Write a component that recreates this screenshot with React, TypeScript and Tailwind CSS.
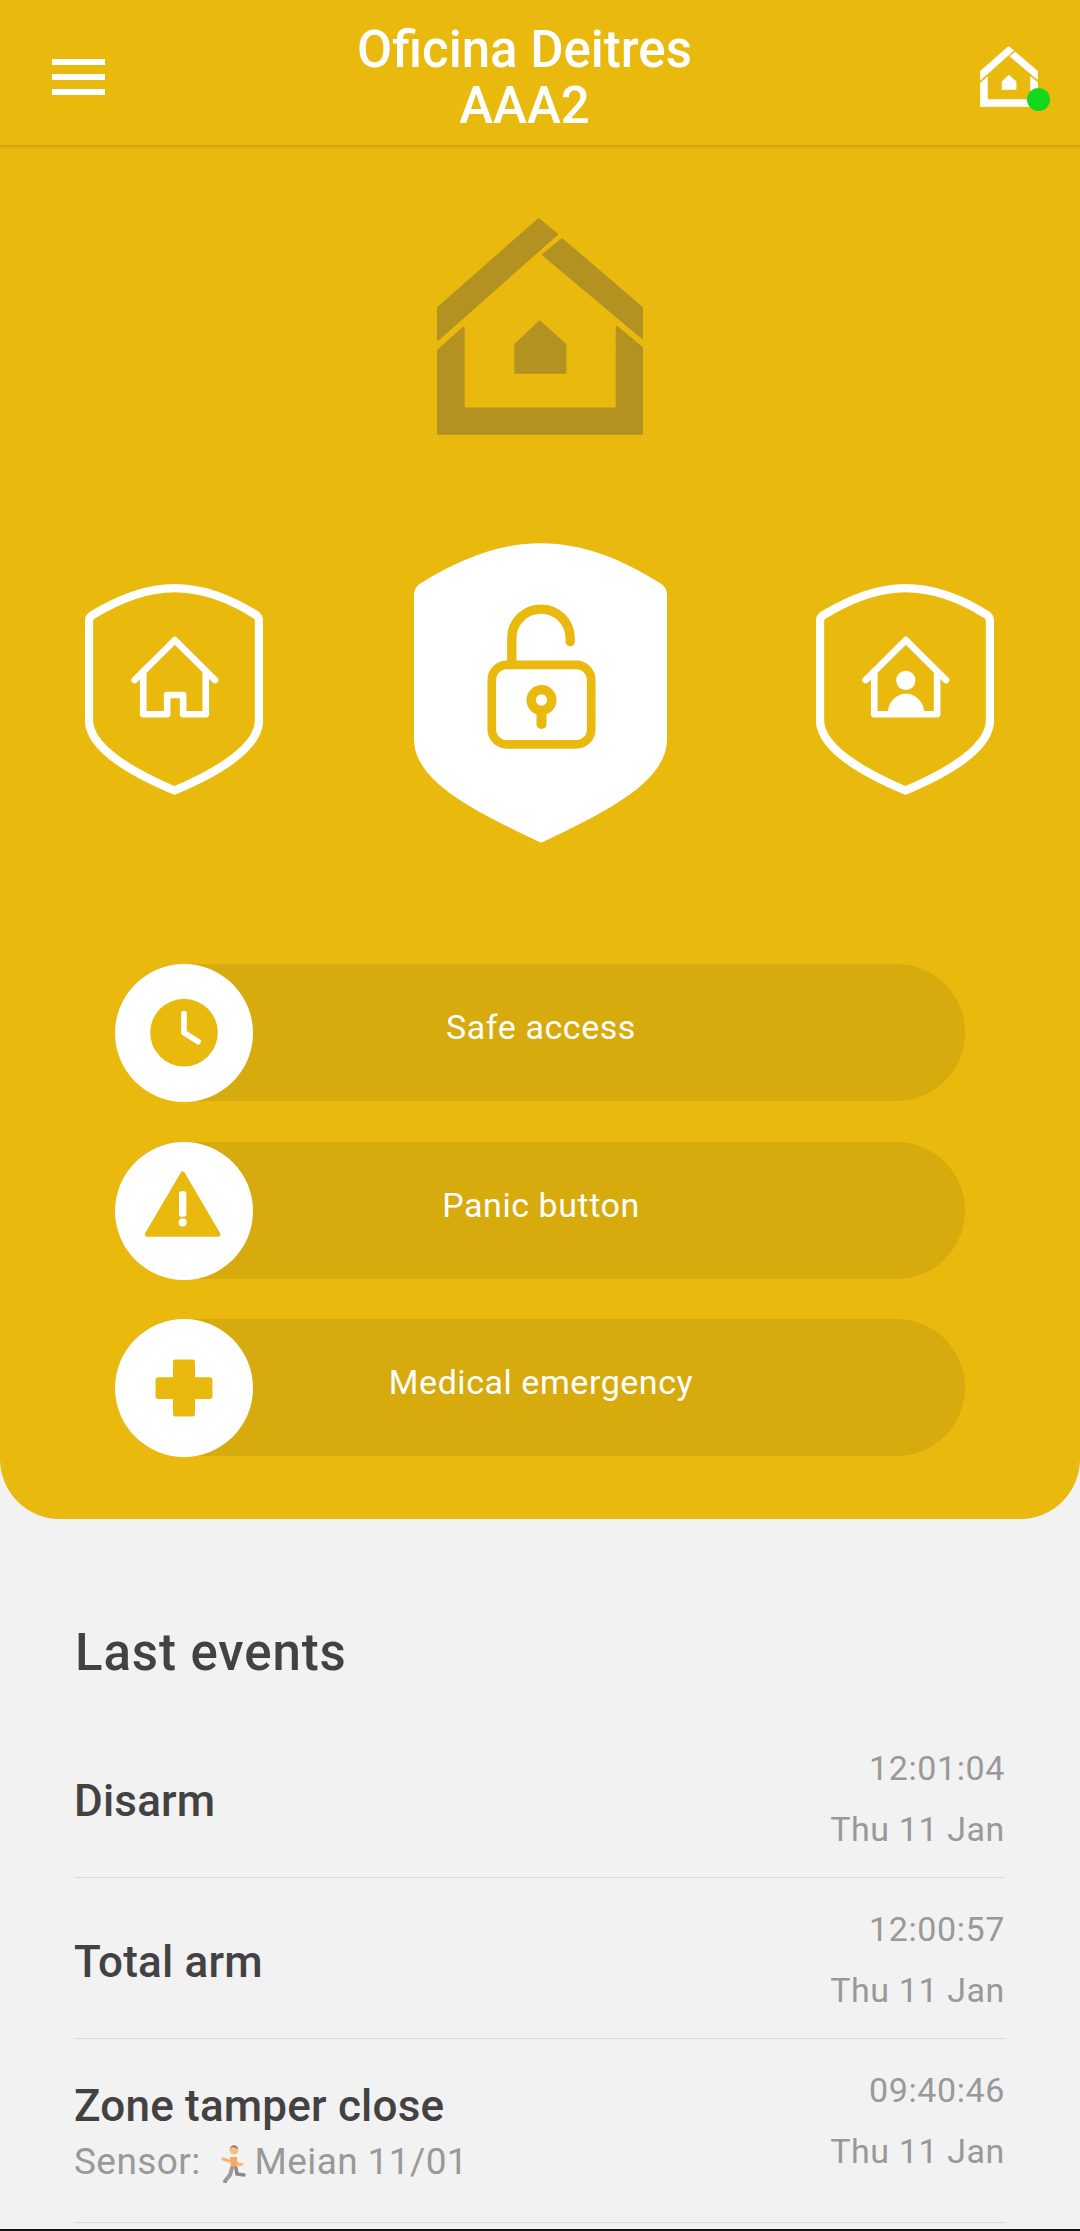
const YELLOW = '#e9b90e';

const ACTIONS = [
  { label: 'Safe access', icon: 'clock' },
  { label: 'Panic button', icon: 'warning' },
  { label: 'Medical emergency', icon: 'cross' },
];

const EVENTS = [
  { title: 'Disarm', time: '12:01:04', date: 'Thu 11 Jan', sensor: false },
  { title: 'Total arm', time: '12:00:57', date: 'Thu 11 Jan', sensor: false },
  { title: 'Zone tamper close', time: '09:40:46', date: 'Thu 11 Jan', sensor: true },
];

function Logo({ className, fill }: { className: string; fill: string }) {
  return (
    <svg viewBox="82 55 618 650" className={className} fill={fill} stroke={fill} strokeWidth="6" strokeLinejoin="round">
      <path d="M387 58 L442 103 L85 420 L85 324 Z" />
      <path d="M457 118 L697 324 L697 414 L400 165 Z" />
      <path d="M85 452 L162 383 L162 626 L621 626 L621 381 L697 444 L697 702 L85 702 Z" />
      <path d="M390 365 L467 434 L467 519 L317 519 L317 434 Z" />
    </svg>
  );
}

function SideShield({ side }: { side: 'left' | 'right' }) {
  const left = side === 'left';
  return (
    <svg viewBox={left ? '75 72 535 633' : '78 72 535 633'} className="mb-[7px] h-[211px] w-[178px]" fill="none" stroke="#fff" strokeLinecap="round" strokeLinejoin="round">
      <g transform={left ? undefined : 'translate(3 0)'}>
        <path strokeWidth="25" d="M344 84 C430 84 510 115 590 165 Q598 172 598 182 L598 480 C598 560 480 635 344 692 C208 635 87 560 87 480 L87 182 Q87 172 97 165 C180 115 260 84 344 84 Z" />
        <path strokeWidth="20" d="M224 360 L345 240 L466 360" />
        {left ? (
          <path strokeWidth="20" d="M250 335 L250 463 L322 463 L322 405 L370 405 L370 463 L438 463 L438 335" />
        ) : (
          <>
            <path strokeWidth="20" d="M250 335 L250 463 L439 463 L439 335" />
            <circle cx="345" cy="361" r="29" fill="#fff" stroke="none" />
            <path d="M289 470 C289 378 402 378 402 470 Z" fill="#fff" stroke="none" />
          </>
        )}
      </g>
    </svg>
  );
}

function MainShield() {
  return (
    <svg viewBox="102 70 758 898" className="ml-[2px] h-[300px] w-[253px]" fill="none" stroke={YELLOW} strokeLinecap="round">
      <path
        fill="#fff"
        stroke="none"
        d="M483 70 C610 70 730 120 840 190 Q860 202 860 225 L860 655 C860 780 700 865 483 968 C265 865 102 780 102 655 L102 225 Q102 202 122 190 C235 120 355 70 483 70 Z"
      />
      <rect x="335" y="435" width="298" height="238" rx="45" strokeWidth="26" />
      <path strokeWidth="28" d="M395 430 L395 355 A87.5 87.5 0 0 1 570 355 L570 365" />
      <circle cx="484" cy="540" r="31" strokeWidth="28" />
      <path strokeWidth="30" d="M484 575 L484 612" />
    </svg>
  );
}

function ActionIcon({ icon }: { icon: string }) {
  if (icon === 'clock') {
    return (
      <svg viewBox="76 42 412 412" className="h-full w-full">
        <circle cx="282" cy="247" r="101" fill={YELLOW} />
        <path d="M282 190 L282 247 L324 274" fill="none" stroke="#fff" strokeWidth="17" strokeLinecap="round" strokeLinejoin="round" />
      </svg>
    );
  }
  if (icon === 'warning') {
    return (
      <svg viewBox="76 573 412 412" className="h-full w-full">
        <path d="M278 668 L384 849 L172 849 Z" fill={YELLOW} stroke={YELLOW} strokeWidth="14" strokeLinejoin="round" />
        <rect x="267" y="720" width="22" height="76" rx="6" fill="#fff" />
        <circle cx="278" cy="813" r="12" fill="#fff" />
      </svg>
    );
  }
  return (
    <svg viewBox="76 1107 412 412" className="h-full w-full">
      <rect x="249" y="1228" width="66" height="170" rx="8" fill={YELLOW} />
      <rect x="197" y="1281" width="170" height="65" rx="8" fill={YELLOW} />
    </svg>
  );
}

// small stand-in for the running person emoji
function Runner() {
  return (
    <svg viewBox="0 0 30 42" className="ml-[15px] mr-[7px] inline-block h-[42px] w-[32px] align-[-10px]">
      <path d="M6 17 L12 19" stroke="#f7b26a" strokeWidth="3" strokeLinecap="round" />
      <path d="M13 15 L20 15 L20 26 L14 26 Z" fill="#f9a75a" />
      <circle cx="17" cy="8" r="4.5" fill="#f7c083" />
      <path d="M13 7 C13 2 21 2 21 7 L19 6 L15 5 Z" fill="#9a7f72" />
      <path d="M19 19 L22 23 L25 22" fill="none" stroke="#f7b26a" strokeWidth="2.5" strokeLinecap="round" />
      <path d="M15 26 L13 33 L8 39" fill="none" stroke="#9b9b9b" strokeWidth="4" strokeLinecap="round" />
      <path d="M19 26 L20 32 L27 33" fill="none" stroke="#8a8a8a" strokeWidth="3.5" strokeLinecap="round" />
      <path d="M5 40 L10 38 L10 41 Z" fill="#8a94b8" />
    </svg>
  );
}

export default function App() {
  return (
    <div className="flex h-[2231px] w-[1080px] flex-col overflow-hidden bg-[#f2f2f2] font-['Roboto',sans-serif]">
      <div className="h-[1519px] shrink-0 rounded-b-[60px] bg-[#e9b90e]">
        {/* Top bar */}
        <header className="relative flex h-[145px] items-center justify-between pl-[52px] pr-[30px] shadow-[0_2px_3px_rgba(120,90,0,0.25)]">
          <div className="mt-[8px] flex w-[53px] flex-col gap-[9px]">
            <div className="h-[6px] bg-white" />
            <div className="h-[6px] bg-white" />
            <div className="h-[6px] bg-white" />
          </div>
          <h1 className="mr-[36px] mt-[10px] text-center text-[51px] font-medium leading-[56px] text-white">
            Oficina Deitres
            <br />
            AAA2
          </h1>
          <div className="relative mt-[7px] mr-[12px]">
            <Logo className="h-[61px] w-[58px]" fill="#fff" />
            <span className="absolute bottom-[-4px] right-[-12px] h-[23px] w-[23px] rounded-full bg-[#14d81e]" />
          </div>
        </header>

        <div className="flex justify-center pt-[73px]">
          <Logo className="h-[217px] w-[206px]" fill="#b39222" />
        </div>

        {/* Arm mode shields */}
        <div className="mt-[108px] flex h-[300px] items-center justify-between pl-[85px] pr-[86px]">
          <SideShield side="left" />
          <MainShield />
          <SideShield side="right" />
        </div>

        {/* Quick actions */}
        <div className="mt-[121px] ml-[115px] flex w-[850px] flex-col gap-[40.5px]">
          {ACTIONS.map((a) => (
            <div key={a.label} className="relative flex h-[137px] items-center justify-center rounded-full bg-[#d7aa0d]">
              <div className="absolute left-0 top-0 h-[138px] w-[138px] rounded-full bg-white">
                <ActionIcon icon={a.icon} />
              </div>
              <span className="mb-[10px] ml-[2px] text-[34px] tracking-[0.55px] text-white">{a.label}</span>
            </div>
          ))}
        </div>
      </div>

      {/* Last events */}
      <div className="flex grow flex-col pl-[74px] pr-[75px]">
        <h2 className="ml-[1px] mt-[109px] text-[51px] font-medium leading-[50px] tracking-[0.9px] text-[#424242]">Last events</h2>
        <div className="mt-[39px]">
          {EVENTS.map((e) => (
            <div key={e.time} className={`flex justify-between border-b border-[#d9d9d9] ${e.sensor ? 'h-[184px]' : 'h-[161px]'}`}>
              <div className="self-center pt-[7px]">
                <div className="text-[44px] font-medium leading-[56px] tracking-[0.2px] text-[#424242]">{e.title}</div>
                {e.sensor && (
                  <div className="text-[37px] leading-[56px] tracking-[0.4px] text-[#999]">
                    Sensor:<Runner />Meian 11/01
                  </div>
                )}
              </div>
              <div className="pt-[21px] text-right text-[34px] leading-[60px] tracking-[0.6px] text-[#999]">
                <div>{e.time}</div>
                <div className="mt-[1px]">{e.date}</div>
              </div>
            </div>
          ))}
        </div>
        <div className="-ml-[74px] -mr-[75px] mt-auto h-[2px] bg-[#111]" />
      </div>
    </div>
  );
}
